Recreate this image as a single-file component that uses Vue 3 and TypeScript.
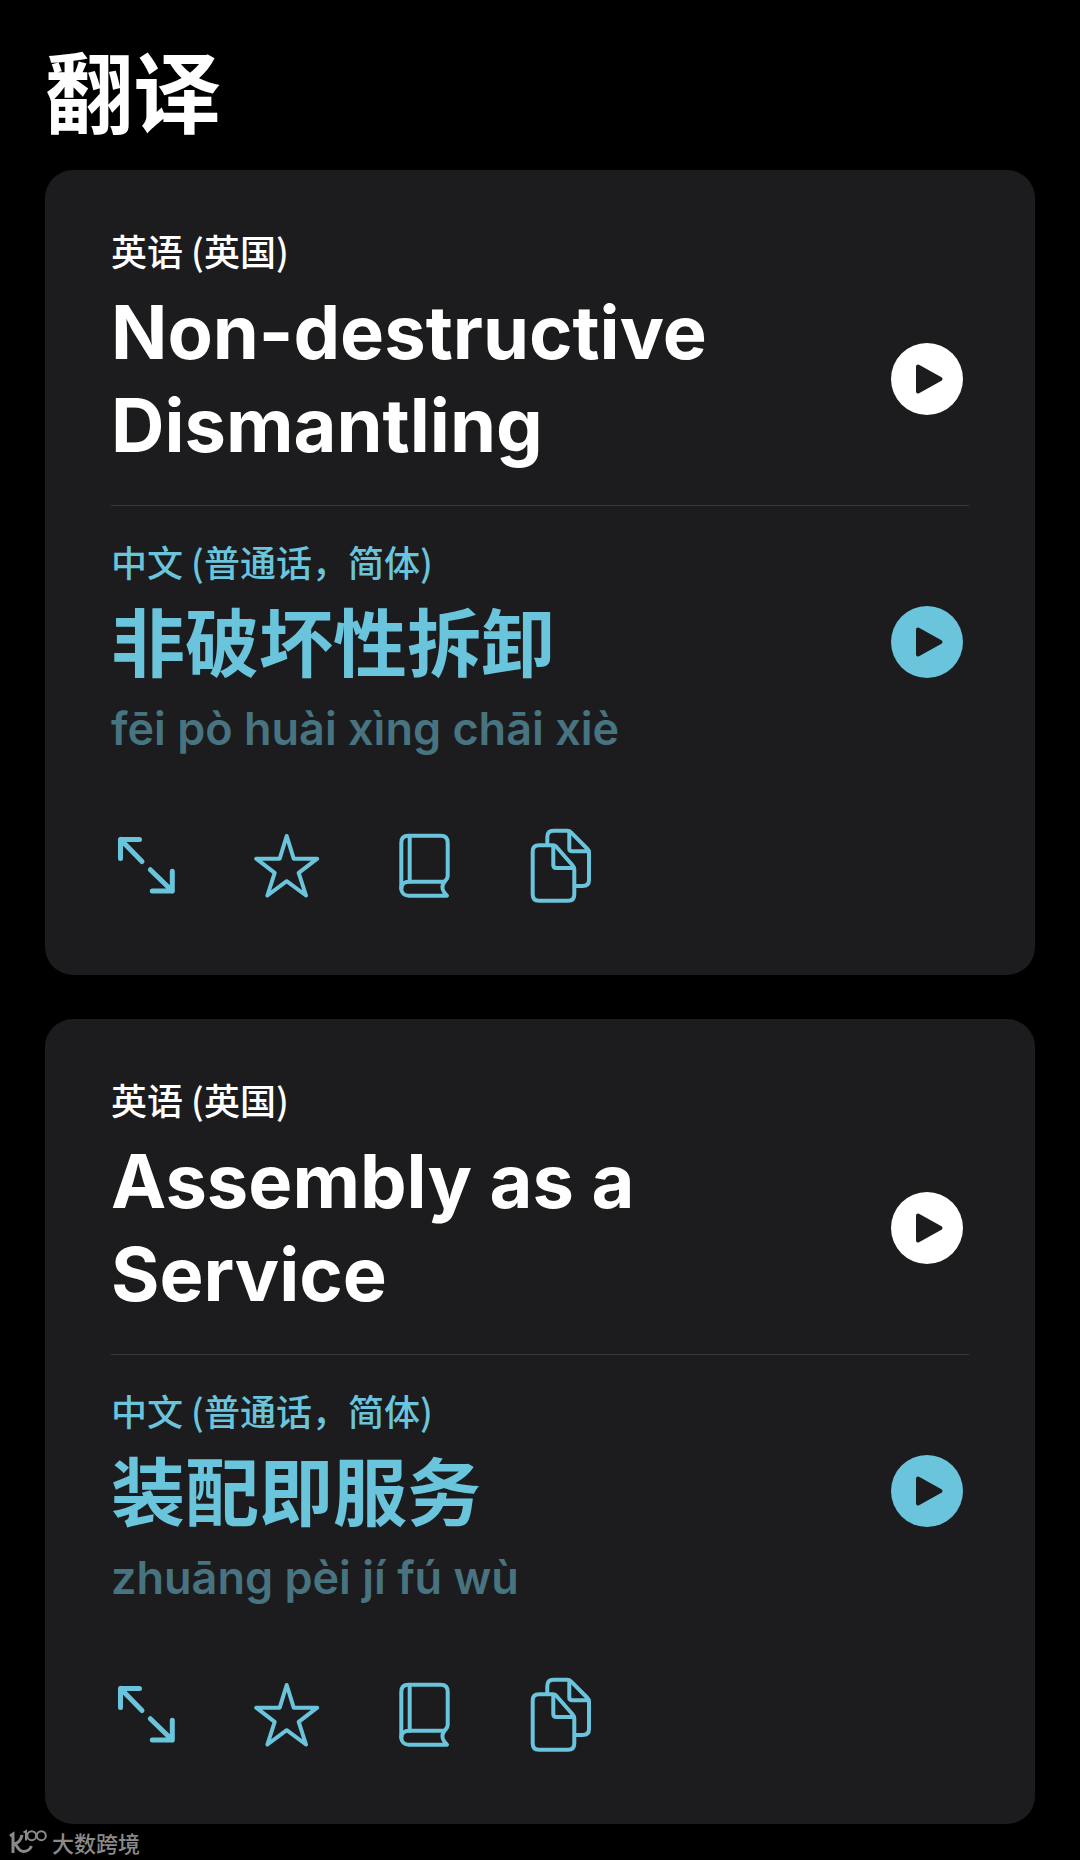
<script setup lang="ts">
interface Entry {
  id: number
  source: string
  target: string
  pinyin: string
}

interface Action {
  label: string
  stroke: number
  paths: string[]
}

const entries: Entry[] = [
  { id: 1, source: 'Non-destructive Dismantling', target: '非破坏性拆卸', pinyin: 'fēi pò huài xìng chāi xiè' },
  { id: 2, source: 'Assembly as a Service', target: '装配即服务', pinyin: 'zhuāng pèi jí fú wù' },
]

const actions: Action[] = [
  {
    label: '全屏',
    stroke: 5,
    paths: ['M28.5 11.5H9.5V30.5M9.5 11.5L31 33.5', 'M61.3 43.3V63H41.3M61.3 63L39.3 41.7'],
  },
  {
    label: '收藏',
    stroke: 4,
    paths: ['M37.7 8L44.7 30.7H68.2L49.7 44.9L57 67.5L37.7 53.2L18.4 67.5L25.7 44.9L7.2 30.7H30.7Z'],
  },
  {
    label: '词典',
    stroke: 4,
    paths: [
      'M60 67.7H22C17.5 67.7 14.3 65 14.3 60.7V14.7C14.3 10 17 7.7 21.3 7.7H53.7C58 7.7 60.7 10 60.7 14.7V48C60.7 51 58.5 52 57 54.5C54 58.5 55.5 63.5 60 67.7Z',
      'M14.3 60.7C14.3 56 17.5 53.7 22 53.7H57',
      'M22.7 8V53.7',
    ],
  },
  {
    label: '拷贝',
    stroke: 4,
    paths: [
      'M28 17.3H14C10 17.3 7.7 19.5 7.7 23.5V66.5C7.7 70.5 10 72.7 14 72.7H43C47 72.7 49.3 70.5 49.3 66.5V41C49.3 39.5 48.5 38.3 47.5 37.3L31.5 19C30.5 18 29.5 17.3 28 17.3Z',
      'M28.3 18V37C28.3 39 29.2 40 31.2 40H49',
      'M22.3 16V9C22.3 5 24.5 2.7 28.5 2.7H42C43.5 2.7 45 3.3 46 4.3L62 20.5C63.2 21.7 64 23 64 24.5V52C64 56 61.5 58 57.5 58H51',
      'M44.3 3.5V20.5C44.3 22.5 45.2 23.3 47.2 23.3H63.5',
    ],
  },
]
</script>

<template>
  <main class="page">
    <h1 class="title">翻译</h1>

    <div class="cards">
      <article v-for="entry in entries" :key="entry.id" class="card">
        <section class="source">
          <p class="language">英语 (英国)</p>
          <div class="row">
            <h2 class="phrase">{{ entry.source }}</h2>
            <button class="play" type="button" aria-label="播放英语">
              <svg viewBox="0 0 72 72" aria-hidden="true">
                <circle cx="36" cy="36" r="36" />
                <path d="M27 23.5L49.5 36L27 48.5Z" />
              </svg>
            </button>
          </div>
        </section>

        <section class="target">
          <p class="language">中文 (普通话，简体)</p>
          <div class="row">
            <h2 class="phrase">{{ entry.target }}</h2>
            <button class="play" type="button" aria-label="播放中文">
              <svg viewBox="0 0 72 72" aria-hidden="true">
                <circle cx="36" cy="36" r="36" />
                <path d="M27 23.5L49.5 36L27 48.5Z" />
              </svg>
            </button>
          </div>
          <p class="pinyin">{{ entry.pinyin }}</p>
        </section>

        <div class="actions">
          <button v-for="action in actions" :key="action.label" class="action" type="button" :aria-label="action.label">
            <svg viewBox="0 0 74 76" :stroke-width="action.stroke" aria-hidden="true">
              <path v-for="d in action.paths" :key="d" :d="d" />
            </svg>
          </button>
        </div>
      </article>
    </div>

    <footer class="credit">
      <svg viewBox="0 0 38 26" aria-hidden="true">
        <path class="thick" d="M1 7L4 5V24M13 6C12 11 9 14 5.500 15C8 15 8.500 22.500 14.500 22.500C18.500 22.500 21 20.500 22.500 17" />
        <path d="M14.500 3.500L17 2V11.500" />
        <circle cx="22.700" cy="6.700" r="4.500" />
        <circle cx="32.300" cy="6.700" r="4.500" />
      </svg>
      <span>大数跨境</span>
    </footer>
  </main>
</template>

<style>
body {
  margin: 0;
  background: #000;
}
</style>

<style scoped>
.page {
  color: #fff;
  font-family: Inter, "Noto Sans CJK SC", sans-serif;
}

h1,
h2,
p {
  margin: 0;
}

.title {
  padding: 44px 45px 26px;
  font-size: 88px;
  line-height: 100px;
  font-weight: 700;
}

.cards {
  display: flex;
  flex-direction: column;
  gap: 44px;
  padding: 0 45px;
}

.card {
  padding: 60px 66px 71px;
  border-radius: 28px;
  background: #1c1c1e;
}

.row {
  display: flex;
  align-items: center;
  justify-content: space-between;
  padding: 16px 6px 0 0;
}

.source {
  padding-bottom: 33px;
}

.target {
  padding-top: 35px;
  border-top: 1px solid #38383a;
  color: #6ac4dc;
}

.target .row {
  padding-top: 14px;
}

.language {
  font-family: "Noto Sans CJK SC", sans-serif;
  font-size: 36px;
  line-height: 40px;
  font-weight: 500;
}

.phrase {
  flex: 1;
  max-width: 660px;
  font-size: 74px;
  line-height: 93px;
  font-weight: 700;
}

.target .phrase {
  padding-top: 6px;
  line-height: 87px;
}

.pinyin {
  padding-top: 11px;
  font-size: 45px;
  line-height: 60px;
  font-weight: 600;
  color: #477480;
}

button {
  padding: 0;
  border: 0;
  background: none;
  color: inherit;
  cursor: pointer;
}

svg {
  display: block;
  width: 100%;
  height: 100%;
}

.play {
  width: 72px;
  height: 72px;
}

.play circle {
  fill: currentColor;
}

.play path {
  fill: #1c1c1e;
  stroke: #1c1c1e;
  stroke-width: 4px;
  stroke-linejoin: round;
}

.actions {
  display: flex;
  gap: 64px;
  padding-top: 69px;
  color: #6ac4dc;
}

.action {
  width: 74px;
  height: 76px;
}

.action path {
  fill: none;
  stroke: currentColor;
  stroke-linecap: round;
  stroke-linejoin: round;
}

.credit {
  display: flex;
  align-items: center;
  gap: 5px;
  height: 36px;
  padding-left: 9px;
  color: #8a8a8a;
  font-family: "Noto Sans CJK SC", sans-serif;
  font-size: 22px;
  line-height: 24px;
  font-weight: 500;
}

.credit svg {
  width: 38px;
  height: 26px;
  fill: none;
  stroke: currentColor;
  stroke-width: 2px;
}

.credit .thick {
  stroke-width: 3px;
}
</style>
